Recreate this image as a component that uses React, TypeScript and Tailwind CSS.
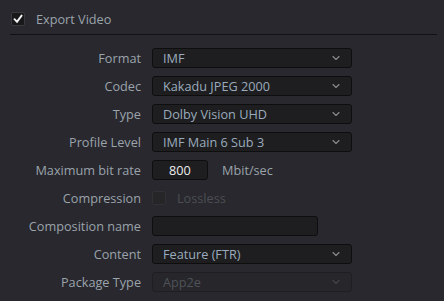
import { ChevronDown } from 'lucide-react';

const font = { fontFamily: '"Open Sans", "Noto Sans", sans-serif' };

interface RowProps {
  label: string;
  children: React.ReactNode;
}

const Row = ({ label, children }: RowProps) => (
  <div className="flex items-center h-5">
    <div className="w-[141px] text-right text-[12.7px] text-[#9ba3ab] leading-none">{label}</div>
    <div className="ml-[11px] flex items-center">{children}</div>
  </div>
);

const Select = ({ value, disabled = false }: { value: string; disabled?: boolean }) => (
  <div
    className={`w-[200px] h-5 rounded-[3px] border flex items-center justify-between pl-[10px] pr-[9px] ${
      disabled ? 'bg-[#26262b] border-[#1f1f23]' : 'bg-[#1e1e20] border-[#0e0e0f]'
    }`}
  >
    <span className={`text-[12.7px] leading-none ${disabled ? 'text-[#4f5257]' : 'text-[#9aabbd]'}`}>{value}</span>
    <ChevronDown
      className={`w-[12px] h-[12px] ${disabled ? 'text-[#44464b]' : 'text-[#8a8a8e]'}`}
      strokeWidth={2.25}
    />
  </div>
);

const App = () => {
  return (
    <div className="w-[444px] h-[301px] bg-[#28282e] overflow-hidden" style={font}>
      {/* header */}
      <div className="flex items-center pt-3 pl-[11px] h-[26px]">
        <div className="w-[14px] h-[14px] rounded-[2px] bg-[#18181a] border border-[#3a3a3e] flex items-center justify-center">
          <svg width="10" height="10" viewBox="0 0 10 10">
            <path d="M1.5 5.2 L4 7.8 L8.6 1.6" stroke="#f4f4f4" strokeWidth="1.9" fill="none" strokeLinecap="round" />
          </svg>
        </div>
        <span className="ml-[11px] text-[12.7px] text-[#9ba3ab] leading-none">Export Video</span>
      </div>
      <div className="ml-[10px] mt-2 w-[427px] h-px bg-[#111113]" />

      <div className="flex flex-col gap-2 mt-[13px]">
        <Row label="Format">
          <Select value="IMF" />
        </Row>
        <Row label="Codec">
          <Select value="Kakadu JPEG 2000" />
        </Row>
        <Row label="Type">
          <Select value="Dolby Vision UHD" />
        </Row>
        <Row label="Profile Level">
          <Select value="IMF Main 6 Sub 3" />
        </Row>
        <Row label="Maximum bit rate">
          <div className="w-[56px] h-5 rounded-[3px] bg-[#1e1e20] border border-[#0e0e0f] flex items-center justify-center">
            <span className="text-[12.7px] text-[#ececec] leading-none">800</span>
          </div>
          <span className="ml-[14px] text-[12.7px] text-[#9ba3ab] leading-none">Mbit/sec</span>
        </Row>
        <Row label="Compression">
          <div className="w-[14px] h-[14px] rounded-[2px] bg-[#262629] border border-[#313135]" />
          <span className="ml-[11px] text-[12.7px] text-[#4c4e53] leading-none">Lossless</span>
        </Row>
        <Row label="Composition name">
          <div className="w-[166px] h-5 rounded-[3px] bg-[#1e1e20] border border-[#0e0e0f]" />
        </Row>
        <Row label="Content">
          <Select value="Feature (FTR)" />
        </Row>
        <Row label="Package Type">
          <Select value="App2e" disabled />
        </Row>
      </div>
    </div>
  );
};

export default App;
